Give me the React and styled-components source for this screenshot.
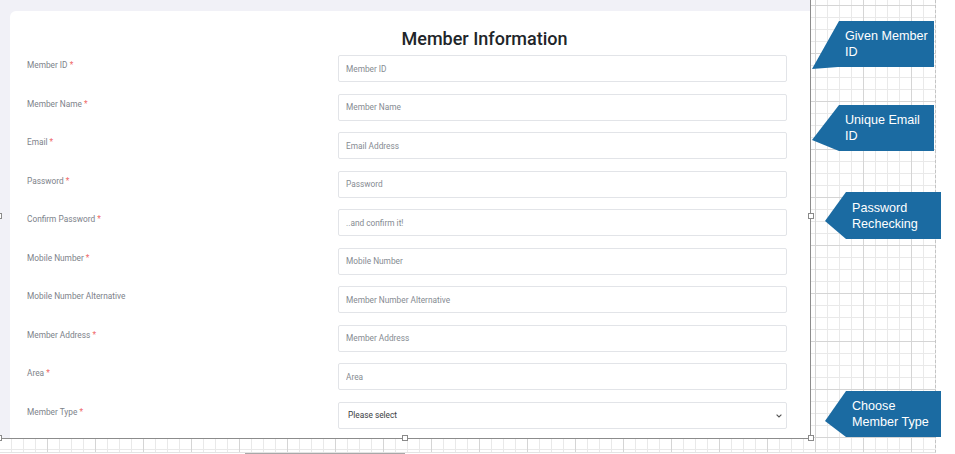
import React from "react";
import styled, { createGlobalStyle } from "styled-components";

const GlobalStyle = createGlobalStyle`
    html, body {
        margin: 0;
        padding: 0;
        background: #ffffff;
        overflow: hidden;
    }
    #root {
        width: 955px;
        height: 454px;
    }
`;

const Page = styled.div`
    width: 955px;
    height: 454px;
    overflow: hidden;
    background: #ffffff;
    font-family: Roboto, "Liberation Sans", sans-serif;
`;

const Canvas = styled.div`
    position: relative;
    width: 936px;
    height: 453px;
    box-sizing: border-box;
    border-right: 1px dashed #c4c4c4;
    border-bottom: 1px solid #e4e4e4;
    background-color: #ffffff;
    background-image: linear-gradient(to right, #d5d5d5 1px, transparent 1px),
        linear-gradient(to bottom, #d5d5d5 1px, transparent 1px),
        linear-gradient(to right, #e9e9e9 1px, transparent 1px),
        linear-gradient(to bottom, #e9e9e9 1px, transparent 1px);
    background-size: 48px 48px, 48px 48px, 12px 12px, 12px 12px;
    background-position: -1px 5px;
`;

const ScrollThumb = styled.div`
    margin-left: 245px;
    width: 160px;
    height: 1px;
    background: #a8a8a8;
`;

/* the pasted screenshot, selected on the canvas */
const Frame = styled.div`
    position: absolute;
    left: -1px;
    top: -8px;
    width: 812px;
    height: 447px;
    box-sizing: border-box;
    border: 1px solid #8c8c8c;
    overflow: hidden;
    background: #f1f1f7;
    display: flex;
    padding: 18px 0 0 10px;
`;

const Card = styled.div`
    flex: 1;
    background: #ffffff;
    border-top-left-radius: 6px;
    padding: 17px 22px 0 17px;
    display: flex;
    flex-direction: column;
`;

const Title = styled.h1`
    margin: 0 0 5px;
    padding-left: 154px;
    text-align: center;
    font-size: 18px;
    line-height: 22px;
    font-weight: 500;
    color: #212529;
`;

const Form = styled.div`
    display: grid;
    grid-template-columns: 311px 449px;
    row-gap: 11.56px;
`;

const Label = styled.label`
    margin-top: 4px;
    font-size: 8.3px;
    line-height: 12px;
    color: #7d828a;
`;

const Star = styled.span`
    color: #f06a6a;
`;

const Input = styled.input`
    height: 27px;
    box-sizing: border-box;
    border: 1px solid #e2e4e8;
    border-radius: 2px;
    padding: 0 7px;
    margin: 0;
    font-family: Roboto, "Liberation Sans", sans-serif;
    font-size: 8.3px;
    color: #444;
    background: #fff;
    outline: none;
    &::placeholder {
        color: #868b92;
    }
`;

const SelectWrap = styled.div`
    position: relative;
    height: 27px;
`;

const Select = styled.select`
    appearance: none;
    width: 100%;
    height: 27px;
    box-sizing: border-box;
    border: 1px solid #e2e4e8;
    border-radius: 2px;
    padding: 0 9px;
    margin: 0;
    font-family: Roboto, "Liberation Sans", sans-serif;
    font-size: 8.3px;
    color: #3a3d42;
    background: #fff;
    outline: none;
`;

const Chevron = styled.svg`
    position: absolute;
    right: 5px;
    top: 12px;
    pointer-events: none;
`;

const Handle = styled.div`
    position: absolute;
    left: ${(p) => p.$x}px;
    top: ${(p) => p.$y}px;
    width: 6px;
    height: 6px;
    box-sizing: border-box;
    border: 1px solid #8a8a8a;
    background: #ffffff;
`;

const Callout = styled.div`
    position: absolute;
    left: ${(p) => p.$x}px;
    top: ${(p) => p.$y}px;
    width: ${(p) => p.$w}px;
    height: ${(p) => p.$h}px;
    box-sizing: border-box;
    padding: ${(p) => p.$top}px 0 0 ${(p) => p.$left}px;
    background: #1b6ba2;
    clip-path: polygon(${(p) => p.$shape});
    color: #ffffff;
    font-family: "Liberation Sans", Arial, sans-serif;
    font-size: 12.6px;
    line-height: 16px;
`;

const fields = [
    { label: "Member ID", hint: "Member ID", required: true },
    { label: "Member Name", hint: "Member Name", required: true },
    { label: "Email", hint: "Email Address", required: true },
    { label: "Password", hint: "Password", required: true },
    { label: "Confirm Password", hint: "..and confirm it!", required: true },
    { label: "Mobile Number", hint: "Mobile Number", required: true },
    { label: "Mobile Number Alternative", hint: "Member Number Alternative" },
    { label: "Member Address", hint: "Member Address", required: true },
    { label: "Area", hint: "Area", required: true },
];

const notes = [
    { text: "Given Member ID", x: 812, y: 21, w: 122, h: 48, top: 7, left: 33, shape: "27px 0, 122px 0, 122px 46px, 26px 46px, 0 48px" },
    { text: "Unique Email ID", x: 812, y: 105, w: 122, h: 46, top: 7, left: 33, shape: "27px 0, 122px 0, 122px 46px, 27px 46px, 0 35px" },
    { text: "Password Rechecking", x: 825, y: 192, w: 116, h: 47, top: 8, left: 27, shape: "21px 0, 116px 0, 116px 47px, 21px 47px, 0 29px" },
    { text: "Choose Member Type", x: 825, y: 391, w: 116, h: 46, top: 7, left: 27, shape: "21px 0, 116px 0, 116px 46px, 21px 46px, 0 30px" },
];

const handles = [
    [-4, 213],
    [808, 213],
    [-4, 435],
    [402, 435],
    [808, 435],
];

const App = () => {
    return (
        <Page>
            <GlobalStyle />
            <Canvas>
                <Frame>
                    <Card>
                        <Title>Member Information</Title>
                        <Form>
                            {fields.map((f) => (
                                <React.Fragment key={f.label}>
                                    <Label>
                                        {f.label} {f.required && <Star>*</Star>}
                                    </Label>
                                    <Input placeholder={f.hint} />
                                </React.Fragment>
                            ))}
                            <Label>
                                Member Type <Star>*</Star>
                            </Label>
                            <SelectWrap>
                                <Select defaultValue="">
                                    <option value="">Please select</option>
                                </Select>
                                <Chevron width="6" height="4" viewBox="0 0 6 4">
                                    <polyline
                                        points="0.6,0.6 3,3 5.4,0.6"
                                        fill="none"
                                        stroke="#555"
                                        strokeWidth="1.1"
                                    />
                                </Chevron>
                            </SelectWrap>
                        </Form>
                    </Card>
                </Frame>
                {handles.map(([x, y]) => (
                    <Handle key={`${x}-${y}`} $x={x} $y={y} />
                ))}
                {notes.map((n) => (
                    <Callout
                        key={n.text}
                        $x={n.x}
                        $y={n.y}
                        $w={n.w}
                        $h={n.h}
                        $top={n.top}
                        $left={n.left}
                        $shape={n.shape}
                    >
                        {n.text}
                    </Callout>
                ))}
            </Canvas>
            <ScrollThumb />
        </Page>
    );
};

export default App;
